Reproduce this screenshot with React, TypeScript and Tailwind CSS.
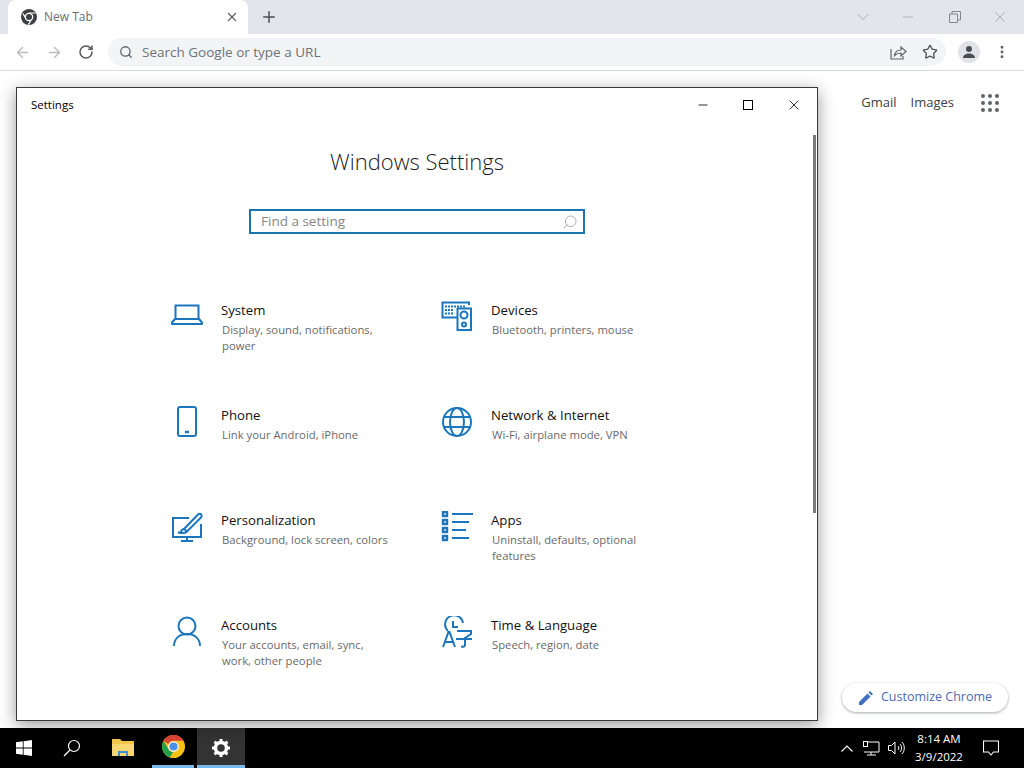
import { ArrowLeft, ArrowRight, RotateCw, Search, Star, X, Plus, ChevronDown, Minus, EllipsisVertical } from "lucide-react";

const items = [
  { icon: "system", title: "System", desc: ["Display, sound, notifications,", "power"] },
  { icon: "devices", title: "Devices", desc: ["Bluetooth, printers, mouse"] },
  { icon: "phone", title: "Phone", desc: ["Link your Android, iPhone"] },
  { icon: "network", title: "Network & Internet", desc: ["Wi-Fi, airplane mode, VPN"] },
  { icon: "personal", title: "Personalization", desc: ["Background, lock screen, colors"] },
  { icon: "apps", title: "Apps", desc: ["Uninstall, defaults, optional", "features"] },
  { icon: "accounts", title: "Accounts", desc: ["Your accounts, email, sync,", "work, other people"] },
  { icon: "time", title: "Time & Language", desc: ["Speech, region, date"] },
];

function SettingIcon({ name }: { name: string }) {
  const common = {
    width: 32,
    height: 32,
    viewBox: "0 0 32 32",
    fill: "none",
    stroke: "#1b76bd",
    strokeWidth: 2,
  };
  if (name === "system")
    return (
      <svg {...common}>
        <path d="M4.500 18V4.500h23V18" />
        <path d="M1 21.500 4 18h24l3 3.500v1.500H1z" strokeLinejoin="round" />
      </svg>
    );
  if (name === "devices")
    return (
      <svg {...common}>
        <path d="M28 4V1.500H1.500v15H16" />
        <path d="M4 5.500h20M4 9h9M4 12.500h9" strokeDasharray="2 1" strokeWidth="2.200" />
        <rect x="16.500" y="7.500" width="13.500" height="21.500" />
        <circle cx="23" cy="14" r="3.500" />
        <circle cx="23" cy="23.500" r="2" />
      </svg>
    );
  if (name === "phone")
    return (
      <svg {...common}>
        <rect x="7" y="1" width="18" height="29" rx="2" />
        <path d="M14 26h4" strokeWidth="2.400" />
      </svg>
    );
  if (name === "network")
    return (
      <svg {...common}>
        <circle cx="16" cy="16" r="14" />
        <ellipse cx="16" cy="16" rx="7" ry="14" />
        <path d="M3 11h26M3 21h26" />
      </svg>
    );
  if (name === "personal")
    return (
      <svg {...common}>
        <path d="M18 7H2v19h28V13" />
        <path d="M16 26v3M10 30h12" />
        <path d="M13 18 27 3.500c1-1 3-1 3.500.5s0 2-1 3L16 20.500z" />
        <path d="M13 18c-2 0-3 2-3 3.500H7c2 .5 7 1 9-1" />
      </svg>
    );
  if (name === "apps")
    return (
      <svg {...common}>
        <rect x="2" y="1" width="4" height="4" strokeWidth="2.400" />
        <rect x="2" y="9" width="4" height="4" strokeWidth="2.400" />
        <rect x="2" y="17" width="4" height="4" strokeWidth="2.400" />
        <rect x="2" y="25" width="4" height="4" strokeWidth="2.400" />
        <path d="M11 3h21M11 11h17M11 19h14M11 27h17" strokeWidth="2.200" />
      </svg>
    );
  if (name === "accounts")
    return (
      <svg {...common}>
        <circle cx="16" cy="10" r="8.500" />
        <path d="M3 30c0-7 5-12 13-12s13 5 13 12" />
      </svg>
    );
  return (
    <svg {...common}>
      <path d="M7 15a9 9 0 1 1 15-8" />
      <path d="M12 5v6h5" />
      <path d="M2 31 7.500 16h1L14 31M4 26h8" />
      <path d="M16 15h14v3l-6 4v7c0 1.500-1 2-4 1.500M15 23h16" />
    </svg>
  );
}

function ChromeLogo({ size }: { size: number }) {
  return (
    <svg width={size} height={size} viewBox="0 0 24 24">
      <circle cx="12" cy="12" r="12" fill="#fbc116" />
      <path d="M12 0a12 12 0 0 1 10.400 6H12a6 6 0 0 0-5.500 3.500L1.600 6A12 12 0 0 1 12 0" fill="#dd4437" />
      <path d="M1.600 6l5 8.700a6 6 0 0 0 4.900 3.300L8.200 23.400A12 12 0 0 1 1.600 6" fill="#22a04c" />
      <circle cx="12" cy="12" r="5.500" fill="#fff" />
      <circle cx="12" cy="12" r="4.300" fill="#4a8fe8" />
    </svg>
  );
}

export default function App() {
  return (
    <div className="relative w-[1024px] h-[768px] overflow-hidden flex flex-col bg-white font-['Open_Sans',sans-serif]">
      {/* chrome tab strip */}
      <div className="h-[34px] bg-[#e2e5e9] flex items-center pl-2 text-[#5f6368]">
        <div className="w-[240px] h-[34px] bg-white rounded-t-lg flex items-center pl-[13px] pr-[9px]">
          <svg width="16" height="16" viewBox="0 0 24 24">
            <circle cx="12" cy="12" r="12" fill="#3c4043" />
            <path d="M12 6h10M8 15 3 7M16 15l-5 8.500" stroke="#fff" strokeWidth="1.800" />
            <circle cx="12" cy="12" r="6.500" fill="#fff" />
            <circle cx="12" cy="12" r="4.500" fill="#3c4043" />
          </svg>
          <span className="ml-[7px] text-[12px] text-[#6b6f74]">New Tab</span>
          <X className="ml-auto text-[#5f6368]" size={14} strokeWidth={2.2} />
        </div>
        <Plus className="ml-3 text-[#4c5054]" size={18} strokeWidth={2} />
        <div className="ml-auto flex items-center text-[#9a9da1]">
          <ChevronDown size={20} strokeWidth={1} className="mr-[27px]" />
          <Minus size={16} strokeWidth={1} className="mr-[33px]" />
          <svg width="12" height="12" viewBox="0 0 12 12" fill="none" stroke="#85888c" className="mr-[30px]">
            <path d="M.5 3h8v8.500h-8zM3 3V.5h8.500V9H9" />
          </svg>
          <X size={18} strokeWidth={1} className="mr-[15px]" />
        </div>
      </div>

      {/* chrome toolbar */}
      <div className="h-[37px] border-b border-[#d9dadc] flex items-center pl-[14px] pr-[16px] text-[#5f6368]">
        <ArrowLeft size={17} className="text-[#babcbe]" strokeWidth={2} />
        <ArrowRight size={17} className="ml-[15px] text-[#babcbe]" strokeWidth={2} />
        <RotateCw size={16} className="ml-[15px] text-[#54575b]" strokeWidth={2.2} />
        <div className="ml-[14px] w-[838px] h-[28px] bg-[#f2f4f5] rounded-full flex items-center pl-[11px] pr-[8px]">
          <Search size={14} strokeWidth={2.2} className="text-[#5f6368]" />
          <span className="ml-[9px] text-[13.500px] text-[#6f7377]">Search Google or type a URL</span>
          <svg width="17" height="16" viewBox="0 0 17 16" fill="none" stroke="#5f6368" strokeWidth="1.200" className="ml-auto">
            <path d="M1 5v10h12v-3" />
            <path d="M4.500 11.500c.5-3.500 3-5.500 6.500-5.500V3l5 4.500-5 4.500V9c-2.500 0-4.500.5-6.500 2.500z" />
          </svg>
          <Star size={16} strokeWidth={2} className="ml-[15px] text-[#54575b]" />
        </div>
        <div className="ml-auto w-[22px] h-[22px] rounded-full bg-[#e0e2e6] flex items-center justify-center">
          <svg width="14" height="14" viewBox="0 0 14 14" fill="#4a4d51">
            <circle cx="7" cy="4" r="3" />
            <path d="M1 13c0-3 3-4.500 6-4.500s6 1.500 6 4.500z" />
          </svg>
        </div>
        <EllipsisVertical size={16} strokeWidth={2.4} className="ml-[14px] -mr-[2px] text-[#5f6368]" />
      </div>

      {/* new tab page behind the window */}
      <div className="flex-1 relative">
        <div className="flex items-center justify-end pt-[22px] pr-[25px] text-[13px] text-[#3c4043]">
          <span>Gmail</span>
          <span className="ml-[14px]">Images</span>
          <div className="ml-[27px] grid grid-cols-3 gap-[3px]">
            {Array.from({ length: 9 }).map((_, i) => (
              <div key={i} className="w-[4px] h-[4px] rounded-full bg-[#5f6368]" />
            ))}
          </div>
        </div>
        <div className="absolute left-[842px] top-[612px] w-[166px] h-[29px] rounded-full bg-white shadow-[0_1px_3px_rgba(60,64,67,0.45)] flex items-center pl-[17px] text-[12.500px] text-[#4a6cb0]">
          <svg width="14" height="14" viewBox="0 0 14 14" fill="#3f70c0">
            <path d="M0 14v-3L8.500 2.500l3 3L3 14zM9.500 1.500 11 0l3 3-1.500 1.500z" />
          </svg>
          <span className="ml-[8px]">Customize Chrome</span>
        </div>
      </div>

      {/* settings window */}
      <div className="absolute left-[16px] top-[87px] w-[802px] h-[634px] bg-white border border-[#3a3a3a] shadow-[0_4px_16px_rgba(0,0,0,0.4)] flex flex-col">
        <div className="h-[33px] flex items-center pl-[14px] text-[11.500px] text-black shrink-0">
          <span>Settings</span>
          <Minus size={14} strokeWidth={1.4} className="ml-auto" />
          <div className="ml-[33px] w-[10px] h-[10px] border border-black" />
          <X size={16} strokeWidth={1.2} className="ml-[33px] mr-[15px]" />
        </div>
        <h1 className="text-center font-light text-[22px] leading-[30px] text-[#1c1c1c] mt-[25px]">Windows Settings</h1>
        <div className="self-center mt-[33px] w-[336px] h-[32px] border-2 border-[#1a75b1] flex items-center pl-[10px] pr-[5px]">
          <span className="text-[13.500px] text-[#868686]">Find a setting</span>
          <Search size={16} strokeWidth={1} className="ml-auto text-[#8a8a8a] -scale-x-100" />
        </div>
        <div className="ml-[154px] mt-[66px] grid grid-cols-[270px_270px] auto-rows-[105px]">
          {items.map((item) => (
            <div key={item.title} className="flex">
              <div className="w-[32px] h-[32px] mt-[1px] shrink-0">
                <SettingIcon name={item.icon} />
              </div>
              <div className="ml-[18px]">
                <div className="text-[13.200px] leading-[20px] text-[#111]">{item.title}</div>
                <div className="ml-px text-[11.300px] leading-[16px] text-[#6a6a6a] mt-[2px]">
                  {item.desc.map((line) => (
                    <div key={line}>{line}</div>
                  ))}
                </div>
              </div>
            </div>
          ))}
        </div>
        {/* scrollbar thumb */}
        <div className="absolute right-[1px] top-[47px] w-[3px] h-[378px] bg-[#7a7a7a]" />
      </div>

      {/* windows taskbar */}
      <div className="h-[40px] bg-black flex items-center text-white shrink-0">
        <div className="w-[48px] flex justify-center">
          <svg width="16" height="16" viewBox="0 0 16 16" fill="#fff">
            <path d="M0 2.300 6.800 1.300V7.600H0zM7.600 1.200 16 0V7.600H7.600zM0 8.400H6.800V14.700L0 13.700zM7.600 8.400H16V16L7.600 14.800z" />
          </svg>
        </div>
        <div className="w-[48px] flex justify-center">
          <svg width="18" height="18" viewBox="0 0 18 18" fill="none" stroke="#fff" strokeWidth="1.200">
            <circle cx="11" cy="7" r="5.500" />
            <path d="M7 11 1 17" />
          </svg>
        </div>
        <div className="w-[53px] h-[40px] flex justify-center items-center">
          <svg width="22" height="20" viewBox="0 0 22 20">
            <path d="M0 1h8l2 2h12v15H0z" fill="#f3c64d" />
            <path d="M0 6h22v12H0z" fill="#f7d774" />
            <path d="M6 13h10v5h-2v-3H8v3H6z" fill="#3f8fd2" />
          </svg>
        </div>
        <div className="w-[48px] h-[40px] flex flex-col">
          <div className="flex-1 flex justify-center items-center">
            <ChromeLogo size={23} />
          </div>
          <div className="h-[3px] mx-[3px] bg-[#76b9ed]" />
        </div>
        <div className="w-[48px] h-[40px] flex justify-center items-center bg-[#333] border-b-[3px] border-[#76b9ed] pt-[3px]">
          <svg width="20" height="20" viewBox="0 0 20 20">
            <circle cx="10" cy="10" r="5.500" fill="none" stroke="#fff" strokeWidth="3.500" />
            <path d="M10 1v3M10 16v3M1 10h3M16 10h3M3.600 3.600l2.100 2.100M14.300 14.300l2.100 2.100M3.600 16.400l2.100-2.100M14.300 5.700l2.100-2.100" stroke="#fff" strokeWidth="3" />
          </svg>
        </div>
        <div className="ml-auto flex items-center">
          <svg width="12" height="7" viewBox="0 0 12 7" fill="none" stroke="#fff" strokeWidth="1.100">
            <path d="M.5 6.500 6 1l5.500 5.500" />
          </svg>
          <svg width="17" height="15" viewBox="0 0 17 15" fill="none" stroke="#fff" className="ml-[10px]">
            <path d="M3 1h13v10H1M8 11v3M4 14h9" />
            <rect x=".5" y=".5" width="4" height="5" fill="#000" />
          </svg>
          <svg width="17" height="14" viewBox="0 0 17 14" fill="none" stroke="#fff" className="ml-[8px]">
            <path d="M.5 4.500h3L7 1v12L3.500 9.500h-3zM10 5c1 1 1 3 0 4M12 3c2 2 2 6 0 8M14 1c3 3 3 9 0 12" />
          </svg>
          <div className="ml-[4px] w-[60px] text-center text-[11.500px] leading-[18px] text-white">
            <div>8:14 AM</div>
            <div>3/9/2022</div>
          </div>
          <svg width="16" height="16" viewBox="0 0 16 16" fill="none" stroke="#fff" strokeWidth="1.100" className="ml-[14px] mr-[25px]">
            <path d="M.5 1h15v11h-5l-2.500 3-2.500-3h-5z" />
          </svg>
        </div>
      </div>
    </div>
  );
}
